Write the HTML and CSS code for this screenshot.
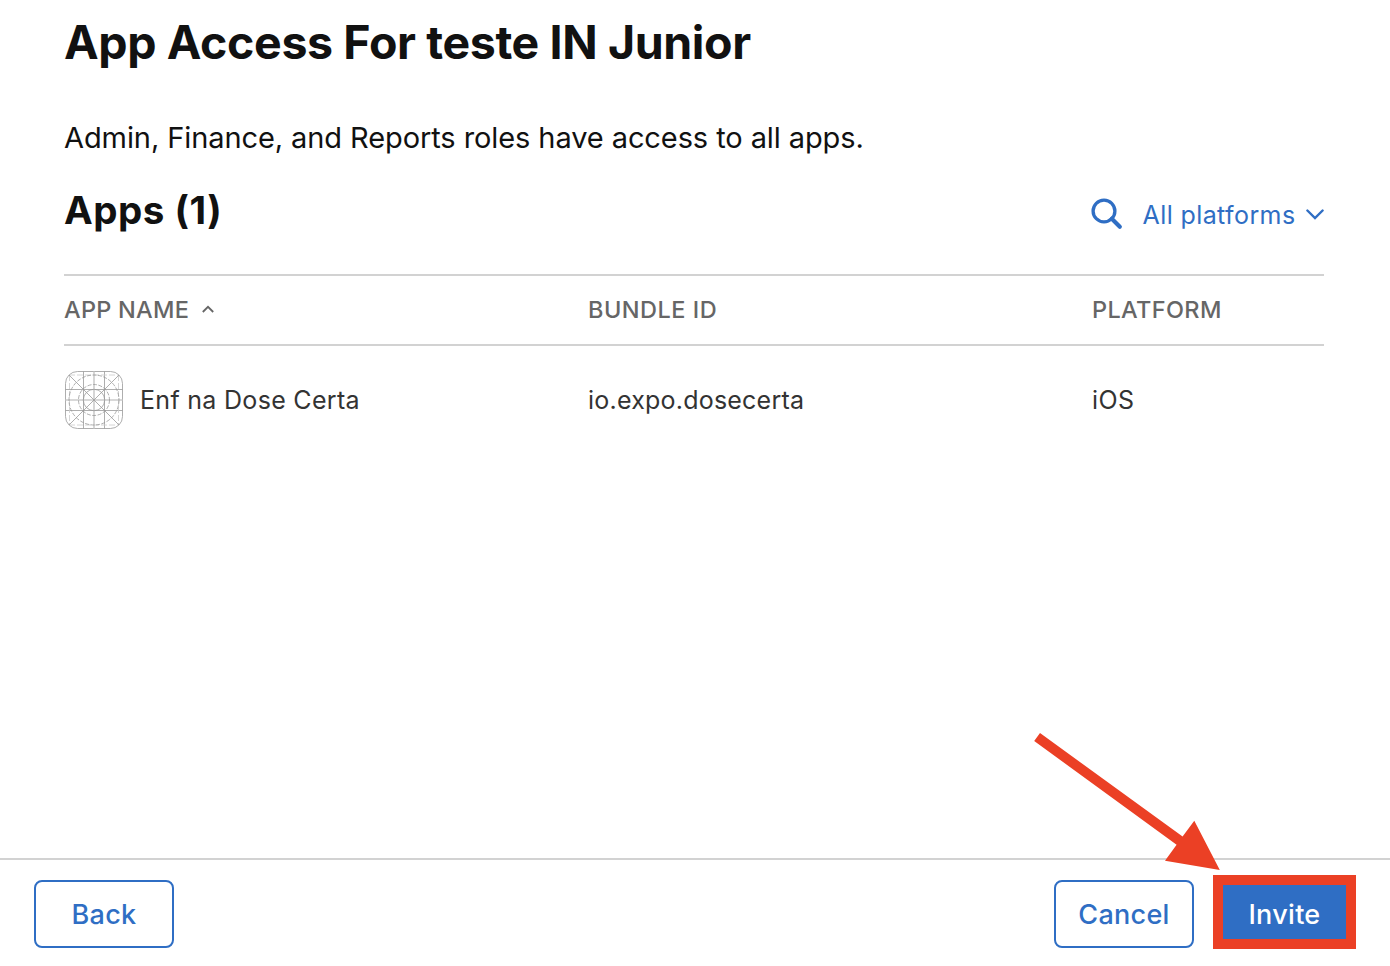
FILE: index.html
```html
<!DOCTYPE html>
<html lang="en">
<head>
<meta charset="utf-8">
<title>App Access</title>
<link rel="stylesheet" href="styles.css">
</head>
<body>
<div class="dialog">
  <main class="content">
    <h1 class="title"><span>App Access For teste IN Junior</span></h1>
    <p class="intro"><span>Admin, Finance, and Reports roles have access to all apps.</span></p>
    <div class="toolbar">
      <h2 class="subtitle">Apps (1)</h2>
      <div class="filters">
        <svg class="search" width="34" height="34" viewBox="0 0 34 34"><circle cx="14" cy="13" r="10.9"/><path d="M21.8 20.8L29.8 28.7" class="handle"/></svg>
        <span class="platforms">All platforms</span>
        <svg class="chevron" width="18" height="12" viewBox="0 0 18 12"><path d="M1.4 1.5L9 9L16.6 1.5"/></svg>
      </div>
    </div>
    <div class="row head">
      <div class="cell name"><span>APP NAME</span><svg class="sort" width="12" height="8" viewBox="0 0 12 8"><path d="M.8 7L6 1.8L11.2 7"/></svg></div>
      <div class="cell">BUNDLE ID</div>
      <div class="cell platform">PLATFORM</div>
    </div>
    <div class="row item">
      <div class="cell app">
        <svg class="appicon" width="60" height="60" viewBox="0 0 60 60">
          <rect x="1.5" y="1.5" width="57" height="57" rx="12"/>
          <path d="M19.5 1.5V58.5M40.5 1.5V58.5M1.5 19.5H58.5M1.5 40.5H58.5"/>
          <path class="axis" d="M30 1.5V58.5M1.5 30H58.5"/>
          <path class="faint" d="M5.5 5V55M54.5 5V55M5 5H55M5 55H55"/>
          <path d="M5 5L55 55M55 5L5 55"/>
          <circle class="dash" cx="30" cy="30" r="25"/><circle class="dash" cx="30" cy="30" r="15.5"/><circle cx="30" cy="30" r="10.7"/>
        </svg>
        <span>Enf na Dose Certa</span>
      </div>
      <div class="cell bundle">io.expo.dosecerta</div>
      <div class="cell">iOS</div>
    </div>
  </main>
  <footer class="footer">
    <button class="btn">Back</button>
    <div class="actions">
      <button class="btn">Cancel</button>
      <button class="btn primary">Invite</button>
    </div>
  </footer>
  <svg class="arrow" width="190" height="142" viewBox="1032 730 190 142"><path d="M1040 733L1182.6 836.6L1194.3 820.7L1219.8 870L1165 860.8L1176.6 844.8L1034.2 741Z"/></svg>
</div>
</body>
</html>
```
FILE: styles.css
```css
* { box-sizing: border-box; }
body { margin: 0; background: #fff; font-family: Inter, sans-serif; color: #111; }
.dialog { position: relative; height: 966px; display: flex; flex-direction: column; overflow: hidden; }
.content { flex: 1; padding: 0 66px 0 64px; }
.title { margin: 0; padding-top: 12px; font-size: 46.5px; line-height: 60px; font-weight: 700; letter-spacing: -0.38px; white-space: nowrap; }
.intro { margin: 46px 0 0; font-size: 29px; line-height: 40px; letter-spacing: -0.09px; white-space: nowrap; }
.toolbar { display: flex; justify-content: space-between; height: 118px; border-bottom: 2px solid #d2d2d2; }
.subtitle { margin: 27px 0 0; font-size: 38.5px; line-height: 50px; font-weight: 700; letter-spacing: .5px; }
.filters { display: flex; align-items: center; height: 40px; margin-top: 37px; color: #2f6ec4; font-size: 25px; }
.filters svg, .sort, .appicon { fill: none; stroke: currentColor; flex: none; }
.search { stroke-width: 3.3; margin-right: 19px; }
.handle { stroke-width: 4.2; stroke-linecap: round; }
.platforms { letter-spacing: .4px; }
.chevron { stroke-width: 2.4; stroke-linecap: round; margin-left: 10.5px; }
.row { display: grid; grid-template-columns: 524px 504px 1fr; align-items: center; }
.cell { display: flex; align-items: center; white-space: nowrap; }
.head { height: 70px; padding-bottom: 2px; border-bottom: 2px solid #d2d2d2; color: #666; font-size: 23.5px; font-weight: 500; letter-spacing: .5px; }
.name { letter-spacing: .25px; }
.platform { letter-spacing: .35px; }
.sort { stroke-width: 1.8; margin-left: 13px; }
.item { height: 108px; color: #333; font-size: 25px; letter-spacing: .4px; }
.app { letter-spacing: .3px; }
.bundle { letter-spacing: .22px; }
.appicon { color: #999; stroke-width: .8; margin-right: 16px; }
.axis { stroke: #ccc; stroke-width: 1.6; }
.faint { stroke: #ccc; stroke-dasharray: 6 2; }
.dash { stroke-dasharray: 4 1.5; }
.footer { height: 108px; border-top: 2px solid #d2d2d2; padding: 15px 34px 0; display: flex; justify-content: space-between; align-items: flex-start; }
.actions { display: flex; gap: 19px; }
.btn { margin: 5px 0 0; padding: 0; width: 140px; height: 68px; border: 2px solid #2f6ec4; border-radius: 8px; background: #fff; color: #2f6ec4; font: 500 27px Inter, sans-serif; letter-spacing: .3px; }
.primary { margin-top: 0; padding-top: 4px; width: 143px; height: 74px; border: 10px solid #eb4025; border-radius: 0; background: #2f6ec4; color: #fff; }
.arrow { position: absolute; left: 1032px; top: 730px; fill: #eb4025; }
```
